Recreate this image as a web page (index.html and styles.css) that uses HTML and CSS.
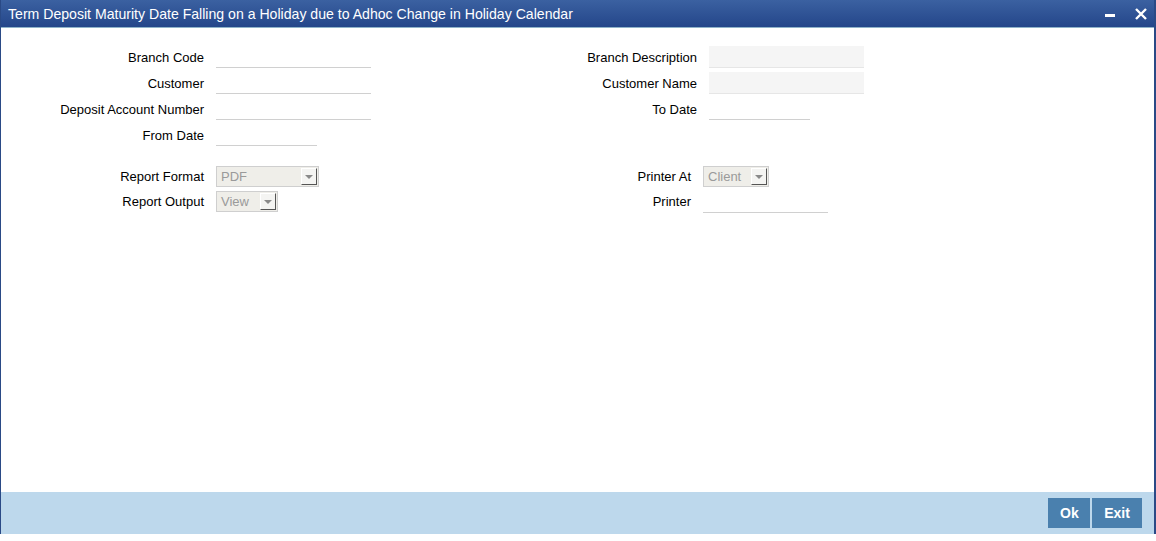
FILE: index.html
```html
<!DOCTYPE html>
<html lang="en">

<head>
    <meta charset="UTF-8">
    <title>Term Deposit Maturity Date Falling on a Holiday</title>
    <link rel="stylesheet" href="styles.css">
</head>

<body>
    <div class="window">
        <div class="titlebar">
            <span class="title">Term Deposit Maturity Date Falling on a Holiday due to Adhoc Change in Holiday Calendar</span>
            <div class="winbtns">
                <svg class="minimize" width="12" height="12" viewBox="0 0 12 12">
                    <rect x="1" y="6" width="10" height="3" fill="#fff" />
                </svg>
                <svg class="close" width="14" height="14" viewBox="0 0 14 14">
                    <path d="M2 2 L12 12 M12 2 L2 12" stroke="#fff" stroke-width="2.4" />
                </svg>
            </div>
        </div>

        <div class="content">
            <div class="fields main">
                <div class="col left">
                    <div class="row"><label>Branch Code</label><span class="input w155"></span></div>
                    <div class="row"><label>Customer</label><span class="input w155"></span></div>
                    <div class="row"><label>Deposit Account Number</label><span class="input w155"></span></div>
                    <div class="row"><label>From Date</label><span class="input w101"></span></div>
                </div>
                <div class="col right">
                    <div class="row"><label>Branch Description</label><span class="input w155 disabled"></span></div>
                    <div class="row"><label>Customer Name</label><span class="input w155 disabled"></span></div>
                    <div class="row"><label>To Date</label><span class="input w101"></span></div>
                </div>
            </div>

            <div class="fields report">
                <div class="col left">
                    <div class="srow"><label>Report Format</label>
                        <span class="select w103"><span class="val">PDF</span><span class="arrow"></span></span>
                    </div>
                    <div class="srow"><label>Report Output</label>
                        <span class="select w62"><span class="val">View</span><span class="arrow"></span></span>
                    </div>
                </div>
                <div class="col right2">
                    <div class="srow"><label>Printer At</label>
                        <span class="select w66"><span class="val">Client</span><span class="arrow"></span></span>
                    </div>
                    <div class="srow"><label>Printer</label><span class="input w125"></span></div>
                </div>
            </div>
        </div>

        <div class="footer">
            <button class="btn">Ok</button>
            <button class="btn">Exit</button>
        </div>
    </div>
</body>

</html>
```

FILE: styles.css
```css
* {
    margin: 0;
    padding: 0;
    box-sizing: border-box;
}

body {
    font-family: "Liberation Sans", Arial, sans-serif;
    font-size: 13px;
    color: #000;
    background: #fff;
}

.window {
    height: 534px;
    display: flex;
    flex-direction: column;
    border-left: 1px solid #2a4a86;
    border-right: 2px solid #2a4a86;
}

.titlebar {
    height: 28px;
    display: flex;
    align-items: center;
    justify-content: space-between;
    padding-left: 7px;
    background: linear-gradient(#3b61a1, #24468a);
    border-bottom: 1px solid #8fb3c9;
    color: #fff;
}

.title {
    font-size: 14.1px;
}

.winbtns {
    display: flex;
    align-items: center;
    gap: 18px;
    padding-right: 6px;
}

.content {
    flex: 1;
}

.fields {
    display: flex;
}

.col {
    display: flex;
    flex-direction: column;
}

.left {
    width: 371px;
}

.main {
    padding-top: 16px;
}

.right {
    margin-left: 122px;
}

.row {
    display: flex;
    align-items: center;
    height: 26px;
}

.row label,
.srow label {
    text-align: right;
    padding-right: 12px;
}

.left label,
.right label,
.right2 label {
    width: 215px;
}

.input {
    display: block;
    height: 22px;
    border-bottom: 1px solid #d0d0d0;
}

.input.disabled {
    background: #f5f5f5;
    border-bottom: 1px solid #e6e6e6;
}

.w155 {
    width: 155px;
}

.w101 {
    width: 101px;
}

.w125 {
    width: 125px;
}

.report {
    padding-top: 16px;
}

.right2 {
    margin-left: 116px;
}

.srow {
    display: flex;
    align-items: center;
    height: 25px;
}

.select {
    display: flex;
    align-items: center;
    justify-content: space-between;
    height: 21px;
    background: #efeee9;
    border: 1px solid #cfcfcf;
    color: #9a9a9a;
    font-size: 13px;
    padding-left: 4px;
}

.w103 {
    width: 103px;
}

.w62 {
    width: 62px;
}

.w66 {
    width: 66px;
}

.arrow {
    position: relative;
    width: 16px;
    height: 17px;
    margin-right: 1px;
    background: #f4f4f2;
    border-top: 1px solid #fff;
    border-left: 1px solid #fff;
    border-right: 1px solid #555;
    border-bottom: 1px solid #555;
}

.arrow::after {
    content: "";
    position: absolute;
    left: 3px;
    top: 6px;
    border-left: 4px solid transparent;
    border-right: 4px solid transparent;
    border-top: 4px solid #8a8a8a;
}

.footer {
    height: 42px;
    background: #bdd8ec;
    display: flex;
    justify-content: flex-end;
    align-items: center;
    gap: 2px;
    padding-right: 12px;
}

.btn {
    height: 30px;
    padding: 0 12px;
    border: none;
    background: #4a80ae;
    color: #fff;
    font-family: "Liberation Sans", Arial, sans-serif;
    font-size: 14px;
    font-weight: bold;
}

.btn:first-child {
    width: 42px;
}

.btn:last-child {
    width: 50px;
}
```
